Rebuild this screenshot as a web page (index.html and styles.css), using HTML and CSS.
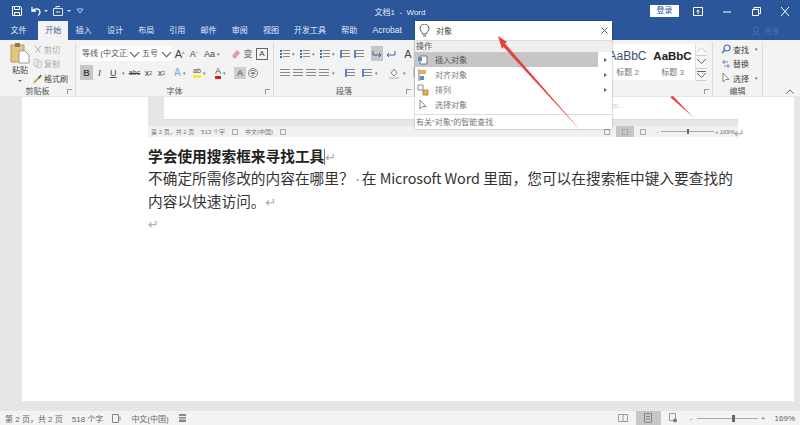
FILE: index.html
```html
<!DOCTYPE html>
<html lang="zh-CN">
<head>
  <meta charset="UTF-8" />
  <title>文档1 - Word</title>
  <link rel="stylesheet" href="styles.css">
</head>
<body>
<div class="app">

  <!-- title bar -->
  <div class="titlebar">
    <div class="qat">
      <svg width="12" height="12" viewBox="0 0 12 12"><path d="M1.500 1.500h8l1 1v8h-9z M3.500 1.500v3h5v-3 M3.500 10.500v-3h5v3" fill="none" stroke="#fff"/></svg>
      <svg width="12" height="12" viewBox="0 0 12 12"><path d="M2 2v4h4 M2.500 6c2-3 7-3 7.500 1 0 1.500-1 3-2 3.500" fill="none" stroke="#fff" stroke-width="1.300"/></svg>
      <span class="caret-w"></span>
      <svg width="13" height="12" viewBox="0 0 13 12"><path d="M1.500 3.500h9v7h-9z M4 3.500v-2h4 M4 7h4" fill="none" stroke="#dfe6f2"/></svg>
      <span class="caret-w"></span>
      <svg class="qat-more" width="8" height="8" viewBox="0 0 8 8"><path d="M1 2h6l-3 4z" fill="none" stroke="#b9c8e0"/></svg>
    </div>
    <div class="doc-title">文档1 &nbsp;-&nbsp; Word</div>
    <div class="win">
      <span class="login">登录</span>
      <svg width="10" height="9" viewBox="0 0 10 9"><path d="M.5.5h9v8h-9z M5 7V3 M3.500 4.500 5 3l1.500 1.500" fill="none" stroke="#fff"/></svg>
      <svg width="10" height="9" viewBox="0 0 10 9"><path d="M1 5h8" stroke="#fff"/></svg>
      <svg width="10" height="9" viewBox="0 0 10 9"><path d="M1.500 2.500h6v6h-6z M3 2.500V.5h6.500v6H8" fill="none" stroke="#fff"/></svg>
      <svg width="10" height="9" viewBox="0 0 10 9"><path d="M1 0l8 9M9 0l-8 9" stroke="#fff"/></svg>
    </div>
  </div>

  <!-- tabs -->
  <div class="tabs">
    <span class="tab tab-file">文件</span>
    <span class="tab active">开始</span>
    <span class="tab">插入</span>
    <span class="tab">设计</span>
    <span class="tab">布局</span>
    <span class="tab">引用</span>
    <span class="tab">邮件</span>
    <span class="tab">审阅</span>
    <span class="tab">视图</span>
    <span class="tab">开发工具</span>
    <span class="tab">帮助</span>
    <span class="tab tab-acrobat">Acrobat</span>
    <span class="share">
      <svg width="10" height="10" viewBox="0 0 10 10"><circle cx="5" cy="3.500" r="2.500" fill="none" stroke="#4a72ad"/><path d="M1 10c0-3 8-3 8 0" fill="none" stroke="#4a72ad"/></svg>
      共享
    </span>
  </div>

  <!-- ribbon -->
  <div class="ribbon">
    <div class="group g-clip">
      <div class="group-body clip">
        <div class="paste">
          <svg width="20" height="22" viewBox="0 0 20 22"><path d="M1 3h13v17H1z" fill="#e8c57f" stroke="#b89a5e"/><path d="M5 1h5v4H5z" fill="#8a7a5c"/><path d="M9 9h6l4 4v8H9z" fill="#fff" stroke="#9a9a9a"/></svg>
          <span class="paste-label">粘贴</span>
          <span class="caret"></span>
        </div>
        <div class="clip-list">
          <div class="clip-item dim"><svg width="10" height="11" viewBox="0 0 11 11"><path d="M2 1l6 8M9 1L3 9" stroke="#b0b0b0" fill="none"/></svg>剪切</div>
          <div class="clip-item dim"><svg width="10" height="11" viewBox="0 0 11 11"><path d="M1 1h5v7H1zM4 3h5v7H4z" stroke="#c4c4c4" fill="#f3f3f3"/></svg>复制</div>
          <div class="clip-item"><svg width="10" height="11" viewBox="0 0 11 11"><path d="M1 10l5-5" stroke="#c9992f" stroke-width="2"/><path d="M6 5l3-3" stroke="#555" stroke-width="2"/></svg>格式刷</div>
        </div>
      </div>
      <div class="group-label">剪贴板<i class="launcher"></i></div>
    </div>

    <div class="group g-font">
      <div class="group-body rows">
        <div class="row">
          <span class="combo combo-font">等线 (中文正文<b class="chev"></b></span>
          <span class="combo combo-size">五号<b class="chev"></b></span>
          <span class="ic ic-text big">A<sup>^</sup></span>
          <span class="ic ic-text small-a">A<sup>ˇ</sup></span>
          <span class="ic ic-text ic-case">Aa<small>▾</small></span>
          <span class="ic ic-eraser"><svg width="12" height="12" viewBox="0 0 12 12"><path d="M2 8l5-6 3 3-5 6z" fill="#e59aa5"/></svg></span>
          <span class="ic ic-cjk">变</span>
          <span class="ic ic-boxa">A</span>
        </div>
        <div class="row">
          <span class="ic ic-b">B</span>
          <span class="ic ic-i">I</span>
          <span class="ic ic-u"><u>U</u><small>▾</small></span>
          <span class="ic ic-s">abc</span>
          <span class="ic ic-sub">x<sub>2</sub></span>
          <span class="ic ic-sub">x<sup>2</sup></span>
          <span class="ic ic-glow">A<small>▾</small></span>
          <span class="ic ic-mark"><em>ab</em><small>▾</small></span>
          <span class="ic ic-color"><em>A</em><small>▾</small></span>
          <span class="ic ic-shade">A</span>
          <span class="ic ic-circle">字</span>
        </div>
      </div>
      <div class="group-label">字体<i class="launcher"></i></div>
    </div>

    <div class="group g-para">
      <div class="group-body rows">
        <div class="row">
          <span class="bars bullets"></span><small>▾</small>
          <span class="bars bullets"></span><small>▾</small>
          <span class="bars bullets"></span><small>▾</small>
          <span class="bars indent"></span>
          <span class="bars indent"></span>
          <span class="ic ic-on"><svg width="12" height="12" viewBox="0 0 12 12"><path d="M2 3v4h8M8 5l2 2-2 2" fill="none" stroke="#39639f"/></svg></span>
          <span class="ic"><svg width="12" height="12" viewBox="0 0 12 12"><path d="M10 3v4H2M4 5L2 7l2 2" fill="none" stroke="#39639f"/></svg></span>
          <span class="ic ic-sort">A</span>
        </div>
        <div class="row row-align">
          <span class="bars"></span>
          <span class="bars"></span>
          <span class="bars"></span>
          <span class="bars"></span><small>▾</small>
          <span class="bars bars-blue"></span>
          <span class="bars bars-blue"></span><small>▾</small>
          <span class="ic ic-fill"><svg width="12" height="12" viewBox="0 0 12 12"><path d="M3 6l3-4 3 4-3 3z" fill="none" stroke="#888"/><path d="M1 11h10" stroke="#aaa"/></svg></span><small>▾</small>
          <span class="ic"><svg width="11" height="11" viewBox="0 0 11 11"><path d="M1 1h9v9H1zM5.500 1v9M1 5.500h9" fill="none" stroke="#aaa"/></svg></span>
        </div>
      </div>
      <div class="group-label">段落<i class="launcher"></i></div>
    </div>

    <div class="group g-styles">
      <div class="group-body gallery-wrap">
        <div class="gallery">
          <div class="style"><span class="sample">AaBbC</span><span class="sname">标题 2</span></div>
          <div class="style"><span class="sample strong">AaBbC</span><span class="sname">标题 3</span></div>
        </div>
        <div class="spin">
          <span><svg width="9" height="5" viewBox="0 0 9 5"><path d="M0 5l4.500-4.500L9 5" fill="none" stroke="#c4c4c4"/></svg></span>
          <span><svg width="9" height="5" viewBox="0 0 9 5"><path d="M0 0l4.500 4.500L9 0" fill="none" stroke="#666"/></svg></span>
          <span class="spin-more"><svg width="9" height="7" viewBox="0 0 9 7"><path d="M0 .5h9M0 2l4.500 4.500L9 2" fill="none" stroke="#666"/></svg></span>
        </div>
      </div>
      <div class="group-label"><i class="launcher"></i></div>
    </div>

    <div class="group g-edit">
      <div class="group-body edit-list">
        <div class="edit-item"><svg width="10" height="10" viewBox="0 0 10 10"><circle cx="6" cy="4" r="3" fill="none" stroke="#3d6fb5" stroke-width="1.200"/><path d="M4 6L1 9" stroke="#3d6fb5" stroke-width="1.500"/></svg>查找<small>▾</small></div>
        <div class="edit-item"><svg width="10" height="10" viewBox="0 0 10 10"><path d="M1 3h6M3 1v4M3 7h6M7 5v4" stroke="#6a8fc0"/></svg>替换</div>
        <div class="edit-item"><svg width="10" height="10" viewBox="0 0 10 10"><path d="M2 0v9l2.500-2.500H8z" fill="#fff" stroke="#888"/></svg>选择<small>▾</small></div>
      </div>
      <div class="group-label">编辑</div>
    </div>

    <svg class="collapse" width="8" height="5" viewBox="0 0 8 5"><path d="M.5 4.500L4 1l3.500 3.500" fill="none" stroke="#666"/></svg>
  </div>

  <!-- document area -->
  <div class="workspace">
    <div class="page">

      <div class="shot">
        <div class="shot-canvas"><div class="shot-page"><span class="shot-text">顺序(S)...</span></div></div>
        <div class="statusbar small">
          <span>第 2 页，共 2 页</span>
          <span>513 个字</span>
          <i class="st-ic"></i>
          <span>中文(中国)</span>
          <i class="st-ic"></i>
          <span class="st-right">
            <i class="st-ic"></i>
            <span class="view on"><i class="st-ic"></i></span>
            <i class="st-ic"></i>
            <span class="zoom-step">-</span>
            <span class="zoom-bar"><b></b></span>
            <span class="zoom-step">+</span>
            <span>169%</span>
          </span>
        </div>
        <span class="mark shot-mark">↵</span>
      </div>

      <div class="doc">
        <p class="doc-head">学会使用搜索框来寻找工具<i class="cursor"></i><span class="mark">↵</span></p>
        <p>不确定所需修改的内容在哪里？<span class="dot">·</span>在 <span class="latin">Microsoft Word</span> 里面，您可以在搜索框中键入要查找的</p>
        <p>内容以快速访问。<span class="mark">↵</span></p>
        <p><span class="mark">↵</span></p>
      </div>
    </div>
  </div>

  <!-- status bar -->
  <div class="statusbar">
    <span>第 2 页，共 2 页</span>
    <span>518 个字</span>
    <svg width="10" height="9" viewBox="0 0 10 9"><path d="M.5.5h6v8h-6zM8 2.500v4" fill="none" stroke="#888"/></svg>
    <span>中文(中国)</span>
    <svg width="9" height="10" viewBox="0 0 9 10"><path d="M1 1h7v8H1z" fill="#888"/><path d="M1 3.500h7M1 6h7" stroke="#f3f3f3"/></svg>
    <span class="st-right">
      <span class="view"><svg width="10" height="10" viewBox="0 0 10 10"><path d="M.5 1.500h9v7h-9zM5 1.500v7" fill="none" stroke="#999"/></svg></span>
      <span class="view on"><svg width="10" height="10" viewBox="0 0 10 10"><path d="M1.500.5h7v9h-7zM3 3.500h4M3 6h4" fill="none" stroke="#888"/></svg></span>
      <span class="view"><svg width="10" height="10" viewBox="0 0 10 10"><path d="M1.500.5h6v7h-6z" fill="none" stroke="#999"/><circle cx="7" cy="7.500" r="2" fill="#777"/></svg></span>
      <span class="zoom-step">-</span>
      <span class="zoom-bar"><b></b></span>
      <span class="zoom-step">+</span>
      <span class="pct">169%</span>
    </span>
  </div>

  <!-- search popup, sits over the ribbon -->
  <div class="popup">
    <div class="search">
      <svg width="11" height="14" viewBox="0 0 11 14"><path d="M3.500 10c0-2-2.500-3-2.500-5.500a4.500 4.500 0 0 1 9 0C10 7 7.500 8 7.500 10z M4 12h3" fill="none" stroke="#555"/></svg>
      <span class="query">对象</span>
      <svg class="x" width="7" height="7" viewBox="0 0 7 7"><path d="M.5.500l6 6M6.500.500l-6 6" stroke="#555"/></svg>
    </div>
    <div class="pop-head">操作</div>
    <div class="pop-item on">
      <svg width="12" height="12" viewBox="0 0 12 12"><path d="M3 2h7v8H3z" fill="#fff" stroke="#777"/><path d="M1 3h4v4H1z" fill="#5a8ec9"/></svg>
      <span>插入对象</span><b class="arrow-box"><i class="arrow"></i></b>
    </div>
    <div class="pop-item">
      <svg width="12" height="12" viewBox="0 0 12 12"><path d="M2 0v12" stroke="#777"/><path d="M3 1h6v4H3z" fill="#e2b04c"/><path d="M3 7h4v4H3z" fill="#5a8ec9"/></svg>
      <span>对齐对象</span><b class="arrow-box"><i class="arrow"></i></b>
    </div>
    <div class="pop-item">
      <svg width="12" height="12" viewBox="0 0 12 12"><path d="M1 1h5v5H1z" fill="#fff" stroke="#888"/><path d="M6 6h5v5H6z" fill="#e2b04c" stroke="#b98c2f"/></svg>
      <span>排列</span><b class="arrow-box"><i class="arrow"></i></b>
    </div>
    <div class="pop-item">
      <svg width="12" height="12" viewBox="0 0 12 12"><path d="M3 1v9l2.500-2.500H9z" fill="#fff" stroke="#888"/></svg>
      <span>选择对象</span>
    </div>
    <div class="pop-foot">有关“对象”的智能查找</div>
  </div>

  <!-- red annotation arrows drawn on the screenshot -->
  <svg class="marks" width="800" height="425" viewBox="0 0 800 425">
    <path d="M498 36l9 6-2 1.500L581 131 503.500 47 502 49z" fill="#e8413c"/>
    <path d="M693 117L670 97l3-1z" fill="#e8413c"/>
  </svg>
</div>
</body>
</html>
```

FILE: styles.css
```css
* { box-sizing: border-box; }

html, body {
  margin: 0;
  height: 100%;
  overflow: hidden;
}

body {
  font-family: "Liberation Sans", "Noto Sans CJK SC", sans-serif;
  font-size: 8px;
  color: #444;
}

.app {
  position: relative;
  width: 800px;
  height: 425px;
  display: flex;
  flex-direction: column;
  background: #e6e6e6;
}

/* title bar */
.titlebar {
  height: 21px;
  background: #2b579a;
  color: #fff;
  display: grid;
  grid-template-columns: 1fr auto 1fr;
  align-items: center;
  padding-top: 1px;
}

.qat {
  display: flex;
  align-items: center;
  padding-left: 11px;
  gap: 2px;
}

.qat svg:nth-child(2) { margin-left: 5px; }
.qat svg:nth-child(4) { margin-left: 2px; }
.qat-more { margin-left: 3px; }

.caret-w {
  width: 0;
  height: 0;
  border: 2px solid transparent;
  border-top: 2px solid #dfe6f2;
  border-bottom: 0;
}

.doc-title {
  font-size: 8px;
  color: #e6ecf6;
}

.win {
  display: flex;
  justify-content: flex-end;
  align-items: center;
  padding-right: 10px;
  gap: 19px;
}

.login {
  width: 29px;
  height: 12px;
  line-height: 12px;
  text-align: center;
  background: #fff;
  color: #2b579a;
  margin-right: -5px;
}

/* tabs */
.tabs {
  height: 19px;
  background: #2b579a;
  display: flex;
  align-items: stretch;
  color: #e3e9f4;
  padding-left: 3px;
}

.tab {
  padding: 0 7.600px;
  line-height: 19px;
  white-space: nowrap;
}

.tab-file { margin-right: 4px; }
.tab-acrobat { font-size: 8.500px; }

.tab.active {
  background: #f3f3f3;
  color: #39639f;
  padding: 0 7px;
}

.share {
  margin-left: auto;
  margin-right: 20px;
  display: flex;
  align-items: center;
  gap: 3px;
  color: #4a72ad;
}

/* ribbon */
.ribbon {
  position: relative;
  height: 57px;
  background: #f3f3f3;
  display: flex;
  color: #555;
  border-bottom: 1px solid #e6e6e6;
}

.group {
  display: flex;
  flex-direction: column;
  border-right: 1px solid #dcdcdc;
  margin: 2px 0 0;
}

.group-body {
  flex: none;
  height: 42px;
}

.group-label {
  position: relative;
  height: 12px;
  line-height: 16px;
  text-align: center;
  color: #555;
}

.launcher {
  position: absolute;
  right: 3px;
  top: 5px;
  width: 5px;
  height: 5px;
  border: 1px solid #999;
  border-width: 1px 0 0 1px;
}

.g-clip { width: 76px; }
.g-font { width: 198px; }
.g-para { width: 141px; }
.g-styles { width: 298px; }
.g-edit { width: 50px; }

.clip {
  display: flex;
  padding: 0 0 0 7px;
}

.paste {
  width: 26px;
  display: flex;
  flex-direction: column;
  align-items: center;
  color: #444;
  line-height: 10px;
}

.paste-label { margin-top: 2px; }

.caret {
  margin-top: 4px;
  width: 0;
  height: 0;
  border: 2px solid transparent;
  border-top-color: #666;
  border-bottom: 0;
}

.clip-item {
  height: 14.500px;
  display: flex;
  align-items: center;
  gap: 1px;
  color: #444;
}

.clip-item.dim { color: #aaa; }

.rows {
  display: flex;
  flex-direction: column;
  gap: 4px;
  padding: 4px 0 0 4px;
}

.row {
  height: 15px;
  display: flex;
  align-items: center;
  white-space: nowrap;
}

.row small {
  font-size: 5px;
  color: #777;
}

.combo {
  position: relative;
  height: 15px;
  line-height: 15px;
  background: #fff;
  overflow: hidden;
  padding-left: 2px;
}

.combo-font { width: 60px; }
.combo-size { width: 32px; margin-right: 1px; }

.combo::after {
  content: "";
  position: absolute;
  right: 0;
  top: 0;
  width: 12px;
  height: 15px;
  background: #fff;
}

.chev {
  position: absolute;
  z-index: 1;
  right: 2px;
  top: 3px;
  width: 7px;
  height: 7px;
  background: #fff;
  border: 1px solid #555;
  border-width: 0 1px 1px 0;
  transform: rotate(45deg);
}

.ic {
  width: 13px;
  height: 15px;
  flex: none;
  display: inline-flex;
  align-items: center;
  justify-content: center;
  font-size: 9px;
  color: #444;
}

.ic sup, .ic sub { font-size: 5px; line-height: 0; }
.ic small { margin-left: 2px; }

.ic-text.big { font-size: 11px; }
.small-a { margin-left: 1px; }
.ic-case { width: 20px; margin-left: 2px; }
.ic-eraser { margin-left: 7px; }
.ic-cjk { color: #666; width: 12px; }
.ic-boxa {
  width: 12px;
  height: 12px;
  margin-left: 2px;
  border: 1px solid #666;
  font-size: 8px;
}

.ic-b { background: #c6c6c6; font-weight: bold; }
.ic-i { font-style: italic; font-family: "Liberation Serif", serif; }
.ic-u { width: 22px; justify-content: flex-start; padding-left: 4px; }
.ic-u small { margin-left: 5px; }
.ic-s { text-decoration: line-through; font-size: 7px; margin-right: 1px; }
.ic-sub { width: 13px; }

.ic-glow { color: #7fa6db; font-size: 10px; width: 20px; justify-content: flex-start; padding-left: 3px; margin-left: 3px; }
.ic-mark { width: 22px; justify-content: flex-start; padding-left: 2px; }
.ic-mark em {
  font-style: normal;
  font-size: 7px;
  border-bottom: 3px solid #f5ec2a;
  line-height: 8px;
}
.ic-color { width: 21px; justify-content: flex-start; padding-left: 2px; }
.ic-color em {
  font-style: normal;
  border-bottom: 3px solid #d81e1e;
  line-height: 9px;
  color: #555;
}
.ic-shade { background: #cfcfcf; width: 12px; height: 12px; }
.ic-circle {
  width: 10px;
  height: 10px;
  margin-left: 2px;
  border: 1px solid #888;
  border-radius: 50%;
  font-size: 6px;
}

.ic-on { background: #c6c6c6; }

.bars {
  width: 10px;
  height: 8px;
  flex: none;
  background: repeating-linear-gradient(#8a8a8a 0 1px, transparent 1px 3px);
}

.bullets {
  border-left: 2px dotted #3d6fb5;
  padding-left: 1px;
  background-clip: content-box;
}

.indent { border-left: 2px solid #5c87c2; }
.bars-blue { border-left: 2px solid #5c87c2; }

.g-para .rows { padding-left: 6px; }
.g-para .row { gap: 2px; }
.g-para .row small { margin-right: 3px; }
.g-para .bars.indent { margin-right: 2px; }
.g-para .ic { width: 12px; }
.g-para .bars.indent + .ic-on { margin-left: 3px; }
.ic-sort { margin-left: 3px; font-size: 11px; }

.row.row-align { gap: 3px; padding-left: 0; }
.row-align .bars-blue { margin-left: 4px; }
.ic-fill { margin-left: 4px; }

.gallery-wrap {
  display: flex;
  justify-content: flex-end;
  padding: 2px 6px 0 0;
}

.gallery {
  display: flex;
  background: #fff;
  height: 36px;
}

.style {
  width: 45px;
  display: flex;
  flex-direction: column;
  align-items: center;
}

.sample {
  font-size: 12px;
  line-height: 24px;
  color: #3a4f70;
}

.sample.strong {
  font-size: 11.500px;
  color: #222;
  font-weight: bold;
}

.sname {
  line-height: 9px;
  color: #777;
}

.spin {
  display: flex;
  flex-direction: column;
  width: 11px;
  height: 37px;
  background: #f8f8f8;
  border-left: 1px solid #ddd;
}

.spin span {
  flex: 1;
  display: flex;
  align-items: center;
  justify-content: center;
  border-bottom: 1px solid #ccc;
}

.edit-list { padding: 0 0 0 8px; }

.edit-item {
  height: 14.500px;
  display: flex;
  align-items: center;
  gap: 2px;
  color: #444;
}

.edit-item small {
  font-size: 5px;
  margin-left: 4px;
  color: #666;
}

.collapse {
  position: absolute;
  right: 6px;
  bottom: 2px;
}

/* document */
.workspace {
  flex: 1;
  padding: 0 11px 10px 22px;
  display: flex;
  min-height: 0;
}

.page {
  flex: 1;
  background: #fff;
  padding-left: 126px;
  padding-right: 56px;
}

.shot {
  position: relative;
  background: #e6e6e6;
  height: 40px;
  display: flex;
  flex-direction: column;
}

.shot-canvas {
  flex: 1;
  padding: 0 0 6px 16px;
}

.shot-page {
  height: 100%;
  background: #fff;
  border-bottom: 1px solid #ddd;
  text-align: right;
  padding: 4px 114px 0 0;
}

.shot-text {
  font-size: 6px;
  line-height: 10px;
  color: #ccc;
}

.shot-mark {
  position: absolute;
  left: 586px;
  bottom: -4px;
  color: #777;
}

.doc {
  margin-top: 8px;
  width: 590px;
  font-family: "Noto Sans CJK SC", sans-serif;
  font-size: 14.700px;
  color: #333;
}

.doc p {
  margin: 0;
  height: 22.300px;
  line-height: 22.300px;
  white-space: nowrap;
}

.doc .doc-head {
  font-weight: bold;
  color: #222;
}

.latin { font-size: 14.400px; letter-spacing: -0.1px; }

.cursor {
  display: inline-block;
  width: 1px;
  height: 16px;
  background: #777;
  vertical-align: -3px;
}

.mark {
  font-family: "DejaVu Sans", sans-serif;
  font-weight: normal;
  font-size: 13px;
  color: #aaa;
}

.dot {
  color: #999;
  margin-right: -1px;
  margin-left: -1px;
  font-size: 10px;
}

/* status bars */
.statusbar {
  height: 14px;
  flex: none;
  background: #f3f3f3;
  color: #666;
  display: flex;
  align-items: center;
  padding-left: 5px;
  gap: 9px;
  white-space: nowrap;
}

.statusbar.small {
  height: 11px;
  font-size: 6px;
  padding-left: 3px;
  gap: 7px;
  color: #777;
  background: #f1f1f1;
}

.st-right {
  margin-left: auto;
  display: flex;
  align-items: center;
  height: 100%;
  padding-right: 5px;
}

.small .st-right { padding-right: 3px; }

.st-ic {
  width: 6px;
  height: 6px;
  flex: none;
  border: 1px solid #aaa;
}

.view {
  width: 25px;
  height: 100%;
  display: flex;
  align-items: center;
  justify-content: center;
}

.view.on { background: #c6c6c6; }
.small .view { width: 18px; margin: 0 6px; }
.small .st-ic + .zoom-step { margin-left: 9px; }

.zoom-step {
  width: 11px;
  text-align: center;
  color: #777;
}

.small .zoom-step { width: 6px; }

.zoom-bar {
  position: relative;
  width: 61px;
  height: 1px;
  background: #aaa;
}

.small .zoom-bar { width: 53px; }

.zoom-bar b {
  position: absolute;
  left: 35px;
  top: -3px;
  width: 3px;
  height: 7px;
  background: #666;
}

.small .zoom-bar b { left: 26px; top: -2px; width: 2px; height: 5px; }

.pct { margin-left: 6px; }

/* search popup */
.popup {
  position: absolute;
  left: 415px;
  top: 21px;
  width: 197px;
  height: 108px;
  background: #fff;
  box-shadow: 0 0 2px rgba(0, 0, 0, 0.35);
  display: flex;
  flex-direction: column;
  color: #555;
}

.search {
  height: 19px;
  display: flex;
  align-items: center;
  flex: none;
  padding-left: 4px;
  gap: 6px;
}

.query { color: #444; }
.x { margin-left: auto; margin-right: 4px; }

.pop-head {
  height: 12px;
  line-height: 12px;
  background: #efefef;
  border-top: 1px solid #ddd;
  padding-left: 1px;
  flex: none;
  color: #555;
}

.pop-item {
  height: 15px;
  display: flex;
  align-items: center;
  flex: none;
  padding-left: 2px;
  gap: 6px;
  color: #777;
  position: relative;
}

.pop-item.on {
  background: #c6c6c6;
  color: #555;
}

.arrow-box {
  position: absolute;
  right: 0;
  top: 0;
  width: 14px;
  height: 100%;
  display: flex;
  align-items: center;
  justify-content: center;
}

.on .arrow-box { background: #fff; }

.arrow {
  width: 0;
  height: 0;
  border: 2px solid transparent;
  border-left: 3px solid #666;
  border-right: 0;
}

.pop-foot {
  margin-top: auto;
  height: 15px;
  line-height: 15px;
  padding-left: 1px;
  border-top: 1px solid #ddd;
  color: #777;
}

/* annotations */
.marks {
  position: absolute;
  left: 0;
  top: 0;
  pointer-events: none;
}
```
